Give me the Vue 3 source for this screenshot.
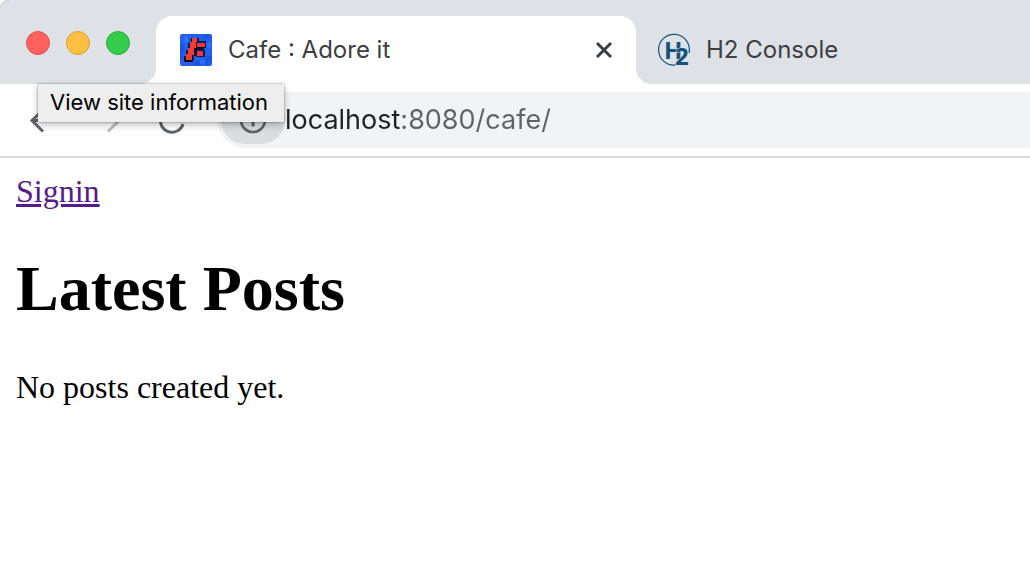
<script setup>
import { ref } from 'vue'

const address = ref('localhost:8080/cafe/')
const windowControls = [
  { name: 'Close window', kind: 'close' },
  { name: 'Minimize window', kind: 'minimize' },
  { name: 'Zoom window', kind: 'maximize' },
]
</script>

<template>
  <div class="window">
    <header class="chrome">
      <div class="strip">
        <div class="lights">
          <button
            v-for="control in windowControls"
            :key="control.kind"
            type="button"
            class="light"
            :class="control.kind"
            :aria-label="control.name"
          ></button>
        </div>

        <div class="tab active">
          <svg class="favicon" viewBox="0 0 32 32" aria-hidden="true">
            <rect width="32" height="32" rx="2" fill="#2260ec" />
            <path d="M0 10h4v8H2v8H0zM24 0h6v4h-4v4h-2zM26 22h6v6h-4v4h-2zM14 27h6v5h-6z" fill="#1a55e0" />
            <path d="M4 2h4v6H4zM27 8h4v6h-4zM20 26h4v4h-4z" fill="#3070f2" />
            <path d="M11 4h8v3h7v7h-2v2h1v7h-9v-1h-2v4h-2v2H4v-6h2v-6h2V9h2z" fill="#101a52" />
            <path d="M4 24h2v2h5v-2h2v4H4zM15 12h2v8h-2zM17 13h7v2h-7z" fill="#080a1c" />
            <path d="M12 4h5v4h-1v6h-2v7h-2v5H6v-6h2v-6h2V8h2z" fill="#f33b2f" />
            <path d="M17 9h8v4h-8zM17 17h6v5h-6z" fill="#e83a3a" />
          </svg>
          <span class="title">Cafe : Adore it</span>
          <button type="button" class="close-tab" aria-label="Close tab">
            <svg viewBox="0 0 18 18" aria-hidden="true">
              <path d="M2 2l14 14M16 2L2 16" fill="none" stroke="#3c4043" stroke-width="3" />
            </svg>
          </button>
        </div>

        <div class="tab">
          <svg class="favicon" viewBox="0 0 32 32" aria-hidden="true">
            <path d="M31 19A15.400 15.400 0 1 0 18 31" fill="none" stroke="#14527a" stroke-width="1.200" />
            <text x="6" y="25" class="mark">H</text>
            <text x="17" y="31" class="mark halo">2</text>
          </svg>
          <span class="title">H2 Console</span>
        </div>
      </div>

      <div class="toolbar">
        <div class="nav">
          <button type="button" class="tool" aria-label="Back">
            <svg viewBox="0 0 32 32" aria-hidden="true">
              <path d="M16 5L4 16.500l11 11M4 16.500h24" fill="none" stroke="#5f6368" stroke-width="3" />
            </svg>
          </button>
          <button type="button" class="tool" aria-label="Forward" disabled>
            <svg viewBox="0 0 32 32" aria-hidden="true">
              <path d="M16 5l11 11.500-11 11M27 16.500H4" fill="none" stroke="#babcbe" stroke-width="3" />
            </svg>
          </button>
          <button type="button" class="tool" aria-label="Reload">
            <svg viewBox="0 0 32 32" aria-hidden="true">
              <path d="M27 20A11.500 11.500 0 1 1 24 8.500l3 3M27 4v8h-8" fill="none" stroke="#5f6368" stroke-width="3" />
            </svg>
          </button>
        </div>
        <div class="omnibox">
          <button type="button" class="site-info" aria-label="View site information" aria-describedby="site-tip">
            <svg viewBox="0 0 32 32" aria-hidden="true">
              <circle cx="16" cy="16" r="12" fill="none" stroke="#5f6368" stroke-width="2.600" />
              <path d="M16 14.500v8M16 9v3" stroke="#5f6368" stroke-width="3" />
            </svg>
          </button>
          <input v-model="address" class="address" type="text" aria-label="Address and search bar" spellcheck="false" />
        </div>
      </div>
      <div id="site-tip" class="tooltip" role="tooltip">View site information</div>
    </header>

    <main class="page">
      <a href="#signin" class="signin">Signin</a>
      <h1>Latest Posts</h1>
      <p>No posts created yet.</p>
    </main>
  </div>
</template>

<style>
body {
  margin: 0;
  background: #fff;
}
</style>

<style scoped>
.window {
  min-height: 100vh;
  background: #fff;
}

.chrome {
  position: relative;
  font-family: Inter, 'Liberation Sans', sans-serif;
}

button {
  padding: 0;
  border: 0;
  background: none;
}

svg {
  display: block;
  overflow: visible;
}

.strip {
  display: flex;
  align-items: flex-end;
  height: 84px;
  background: #dee1e6;
  border-top-left-radius: 10px;
  box-shadow: 0 0 2px #888;
  clip-path: inset(0);
}

.lights {
  display: flex;
  align-self: flex-start;
  flex: none;
  gap: 16px;
  width: 130px;
  padding: 31px 0 0 26px;
}

.light {
  box-sizing: border-box;
  width: 24px;
  height: 24px;
  border: 1px solid;
  border-radius: 50%;
}

.close {
  background: #ff625c;
  border-color: #e2504b;
}

.minimize {
  background: #ffbf43;
  border-color: #dfa033;
}

.maximize {
  background: #35cb4b;
  border-color: #28ac38;
}

.tab {
  position: relative;
  display: flex;
  align-items: center;
  gap: 16px;
  height: 68px;
  padding: 0 22px;
}

.active {
  box-sizing: border-box;
  flex: 0 1 480px;
  padding: 0 23px 0 24px;
  background: #fff;
  border-radius: 16px 16px 0 0;
}

.active::before,
.active::after {
  content: '';
  position: absolute;
  bottom: 0;
  width: 16px;
  height: 16px;
}

.active::before {
  right: 100%;
  background: radial-gradient(circle at 0 0, transparent 16px, #fff 16px);
}

.active::after {
  left: 100%;
  background: radial-gradient(circle at 100% 0, transparent 16px, #fff 16px);
}

.favicon {
  flex: none;
  width: 32px;
  height: 32px;
}

.mark {
  font-family: 'Open Sans', sans-serif;
  font-size: 24px;
  font-weight: 700;
  fill: #14527a;
}

.halo {
  stroke: #dee1e6;
  stroke-width: 1px;
  paint-order: stroke;
}

.title {
  flex: 1;
  color: #3c4043;
  font-size: 24px;
  line-height: 32px;
  white-space: nowrap;
}

.close-tab svg {
  width: 18px;
  height: 18px;
}

.toolbar {
  display: flex;
  align-items: center;
  height: 72px;
  border-bottom: 2px solid #dadce0;
}

.nav {
  display: flex;
  flex: none;
  gap: 32px;
  padding: 0 29px 0 28px;
}

.tool svg,
.site-info svg {
  width: 32px;
  height: 32px;
}

.omnibox {
  display: flex;
  flex: 1;
  align-items: center;
  min-width: 0;
  height: 56px;
  padding-left: 4px;
  background: #f1f3f4;
  border-radius: 28px 0 0 28px;
}

.site-info {
  display: grid;
  flex: none;
  place-items: center;
  width: 64px;
  height: 48px;
  background: #dcdddf;
  border-radius: 24px;
}

.address {
  flex: 1;
  min-width: 0;
  height: 40px;
  padding: 0;
  border: 0;
  outline: 0;
  font: 27px/40px Inter, 'Liberation Sans', sans-serif;
  color: transparent;
  caret-color: #202124;
  background: linear-gradient(90deg, #202124 116px, #5f6368 116px);
  background-clip: text;
}

.tooltip {
  position: absolute;
  top: 84px;
  left: 38px;
  padding: 2px 16px 4px 12px;
  background: #eee;
  box-shadow: 0 0 2px rgba(0, 0, 0, 0.4), 0 3px 7px rgba(0, 0, 0, 0.25);
  color: #000;
  font-size: 22px;
  line-height: 32px;
  white-space: nowrap;
}

.page {
  padding: 15px 16px;
  color: #000;
  font: 32px/36px 'Liberation Serif', serif;
}

.signin {
  color: #551a8b;
}

h1 {
  margin: 44px 0;
  font-size: 64px;
  line-height: 72px;
}

p {
  margin: 0;
}
</style>
